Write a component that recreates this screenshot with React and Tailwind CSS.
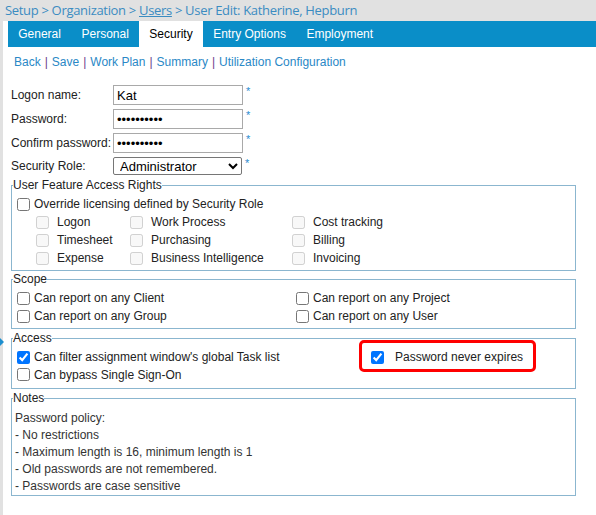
import React from "react";

const TABS = ["General", "Personal", "Security", "Entry Options", "Employment"];
const LINKS = ["Back", "Save", "Work Plan", "Summary", "Utilization Configuration"];

const FEATURES = [
  ["Logon", "Work Process", "Cost tracking"],
  ["Timesheet", "Purchasing", "Billing"],
  ["Expense", "Business Intelligence", "Invoicing"],
];

const NOTES = [
  "Password policy:",
  "- No restrictions",
  "- Maximum length is 16, minimum length is 1",
  "- Old passwords are not remembered.",
  "- Passwords are case sensitive",
];

function Box({ checked = false, disabled = false }) {
  return (
    <input
      type="checkbox"
      readOnly
      checked={checked}
      disabled={disabled}
      className="w-[13px] h-[13px] m-0 shrink-0"
    />
  );
}

function Star() {
  return <span className="self-start text-[11px] leading-none text-[#2a8bd0] ml-[3px] mt-[1px]">*</span>;
}

function Group({ title, className = "", children }) {
  return (
    <fieldset className={`border border-[#8bb6cf] ml-[8px] w-[565px] ${className}`}>
      <legend className="px-0 ml-[1px] text-[12px] leading-[14px] text-[#222]">{title}</legend>
      {children}
    </fieldset>
  );
}

export default function App() {
  return (
    <div className="w-[596px] min-h-[515px] bg-white font-['Liberation_Sans',Arial,sans-serif] text-[12px] text-[#222]">
      {/* breadcrumb */}
      <div className="h-[21px] bg-[#e1e1e1] pl-[5px] flex items-center text-[13px] text-[#3b8cc1] font-['Open_Sans',sans-serif] tracking-[-0.32px]">
        Setup &gt; Organization &gt;&nbsp;<span className="underline">Users</span>&nbsp;&gt; User Edit: Katherine, Hepburn
      </div>

      <div className="flex min-h-[494px]">
        <div className="w-[3px] bg-[#e1e1e1] relative shrink-0">
          <span className="absolute left-0 top-[317px] w-0 h-0 border-y-[4px] border-y-transparent border-l-[4px] border-l-[#1e8fcf]" />
        </div>

        <div className="flex-1">
          {/* tabs */}
          <div className="ml-[5px] h-[26px] bg-[#0a8ec8] flex">
            {TABS.map((t) => (
              <div
                key={t}
                className={`px-[10.25px] flex items-center ${
                  t === "Security" ? "bg-white text-black" : "text-white"
                }`}
              >
                {t}
              </div>
            ))}
          </div>

          {/* action links */}
          <div className="h-[30px] pl-[11px] flex items-center text-[#2a88c6]">
            {LINKS.map((l, i) => (
              <React.Fragment key={l}>
                {i > 0 && <span className="text-[#6d3d8c] mx-[4px]">|</span>}
                <span>{l}</span>
              </React.Fragment>
            ))}
          </div>

          {/* credentials */}
          <div className="mt-[8px] pl-[8px] flex flex-col gap-[4px]">
            {[
              ["Logon name:", "text", "Kat"],
              ["Password:", "password", "kkkkkkkkkk"],
              ["Confirm password:", "password", "kkkkkkkkkk"],
            ].map(([label, type, val]) => (
              <div key={label} className="flex items-center h-[20px]">
                <span className="w-[102px]">{label}</span>
                <input
                  type={type}
                  readOnly
                  value={val}
                  className="w-[130px] h-[20px] border border-[#a9a9a9] px-[3px] text-[13px] text-black outline-none"
                />
                <Star />
              </div>
            ))}
            <div className="flex items-center h-[18px]">
              <span className="w-[102px]">Security Role:</span>
              <select
                defaultValue="Administrator"
                className="w-[129px] h-[18px] border border-[#767676] rounded-[2px] px-[2px] text-[13px] text-black"
              >
                <option>Administrator</option>
              </select>
              <Star />
            </div>
          </div>

          <Group title="User Feature Access Rights" className="mt-[3px]">
            <div className="pt-[3px] pb-[3px]">
              <div className="h-[18px] pl-[5px] flex items-center gap-[4px]">
                <Box />
                <span>Override licensing defined by Security Role</span>
              </div>
              {FEATURES.map((row, r) => (
                <div key={r} className="h-[18px] pl-[24px] grid grid-cols-[94px_162px_1fr] items-center">
                  {row.map((f) => (
                    <div key={f} className="flex items-center gap-[8px]">
                      <Box disabled />
                      <span>{f}</span>
                    </div>
                  ))}
                </div>
              ))}
            </div>
          </Group>

          <Group title="Scope" className="mt-[1px]">
            <div className="pt-[3px] pb-[3px] pl-[5px]">
              {[
                ["Can report on any Client", "Can report on any Project"],
                ["Can report on any Group", "Can report on any User"],
              ].map((row, r) => (
                <div key={r} className="h-[18px] grid grid-cols-[279px_1fr] items-center">
                  {row.map((s) => (
                    <div key={s} className="flex items-center gap-[4px]">
                      <Box />
                      <span>{s}</span>
                    </div>
                  ))}
                </div>
              ))}
            </div>
          </Group>

          <Group title="Access" className="mt-[2px]">
            <div className="pt-[3px] pb-[5px] pl-[5px]">
              <div className="h-[18px] grid grid-cols-[354px_1fr] items-center">
                <div className="flex items-center gap-[4px]">
                  <Box checked />
                  <span>Can filter assignment window's global Task list</span>
                </div>
                <div className="relative flex items-center gap-[11px]">
                  <Box checked />
                  <span>Password never expires</span>
                  <span className="absolute -left-[12px] -top-[8px] w-[177px] h-[32px] border-[3px] border-[#ff0000] rounded-[5px]" />
                </div>
              </div>
              <div className="h-[17px] flex items-center gap-[4px]">
                <Box />
                <span>Can bypass Single Sign-On</span>
              </div>
            </div>
          </Group>

          <Group title="Notes" className="mt-[2px]">
            <div className="pt-[5px] pb-0 pl-[3px] leading-[17px] text-[#333]">
              {NOTES.map((n) => (
                <div key={n}>{n}</div>
              ))}
            </div>
          </Group>
        </div>
      </div>
    </div>
  );
}
